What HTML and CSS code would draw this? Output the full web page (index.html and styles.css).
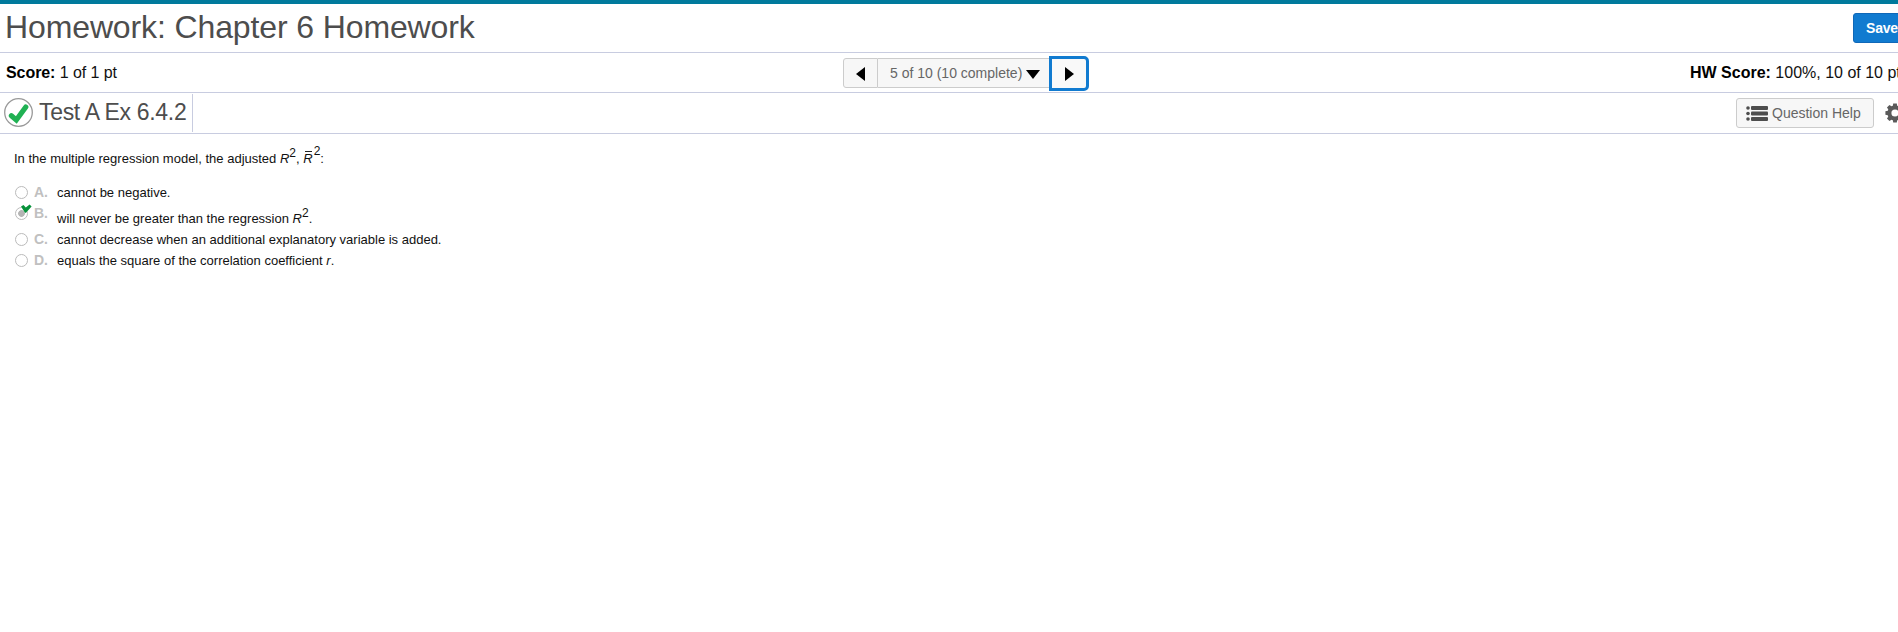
FILE: index.html
```
<!DOCTYPE html>
<html lang="en">
<head>
<meta charset="utf-8">
<title>Homework: Chapter 6 Homework</title>
<link rel="stylesheet" href="styles.css">
</head>
<body>
<div class="page">
  <header class="header"><h1 class="title">Homework: Chapter 6 Homework</h1><button class="save">Save</button></header>
  <div class="score-row">
    <div class="score"><b>Score:</b> <span>1 of 1 pt</span></div>
    <nav class="pager">
      <button class="prev"><svg width="9" height="14"><path d="M9 0V14L0 7Z"/></svg></button>
      <div class="position"><span class="position-text">5 of 10 (10 complete)</span><svg width="14" height="9"><path d="M0 0H14L7 9Z"/></svg></div>
      <button class="next"><svg width="9" height="14"><path d="M0 0V14L9 7Z"/></svg></button>
    </nav>
    <div class="hw-score"><b>HW Score:</b> <span>100%, 10 of 10 pts</span></div>
  </div>
  <div class="question-row">
    <div class="question-name">
      <svg class="status" width="30" height="30" viewBox="0 0 30 30"><circle cx="14.5" cy="14.5" r="13.8" fill="#fff" stroke="#999" stroke-width="1.3"/><path d="M7.4 17.8L12.3 22L21.8 9" fill="none" stroke="#20b153" stroke-width="5.2" stroke-linecap="round"/></svg>
      <h2 class="name">Test A Ex 6.4.2</h2>
    </div>
    <div class="tools">
      <button class="help"><svg width="22" height="15" viewBox="0 0 22 15" fill="#4d4d4d"><circle cx="2" cy="2" r="1.8"/><circle cx="2" cy="7.5" r="1.8"/><circle cx="2" cy="13" r="1.8"/><rect x="5" y="0" width="17" height="4" rx="1"/><rect x="5" y="5.5" width="17" height="4" rx="1"/><rect x="5" y="11" width="17" height="4" rx="1"/></svg><span>Question Help</span></button>
      <svg class="gear" width="20" height="20" viewBox="-10 -10 20 20"><circle r="5.6" fill="none" stroke="#5a5a5a" stroke-width="4"/><g fill="#5a5a5a"><path id="tooth" d="M-2.4 -6L-1.8 -9.6H1.8L2.4 -6Z"/><use href="#tooth" transform="rotate(45)"/><use href="#tooth" transform="rotate(90)"/><use href="#tooth" transform="rotate(135)"/><use href="#tooth" transform="rotate(180)"/><use href="#tooth" transform="rotate(225)"/><use href="#tooth" transform="rotate(270)"/><use href="#tooth" transform="rotate(315)"/></g></svg>
    </div>
  </div>
  <main class="question">
    <p class="prompt"><span class="prompt-text">In the multiple regression model, the adjusted</span> <i>R</i><sup>2</sup>, <i class="mean">R</i><sup class="high">2</sup>:</p>
    <div class="option"><span class="radio"></span><b class="letter">A.</b><span class="answer">cannot be negative.</span></div>
    <div class="option option-b"><span class="radio chosen"><svg class="tick" width="11" height="10" viewBox="0 0 11 10"><path d="M0 2.6L2.5 1L4.8 3.6L8.6 0.6L10.6 2.4L5 8.8H4Z" fill="#07923a"/></svg></span><b class="letter">B.</b><span class="answer">will never be greater than the regression <i>R</i><sup>2</sup>.</span></div>
    <div class="option"><span class="radio"></span><b class="letter">C.</b><span class="answer">cannot decrease when an additional explanatory variable is added.</span></div>
    <div class="option"><span class="radio"></span><b class="letter">D.</b><span class="answer">equals the square of the correlation coefficient <i>r</i>.</span></div>
  </main>
</div>
</body>
</html>
```
FILE: styles.css
```
* { box-sizing: border-box; }
body { margin: 0; background: #fff; color: #111; font-family: "Liberation Sans", Arial, sans-serif; overflow: hidden; }
button { font-family: inherit; padding: 0; margin: 0; }
svg { display: block; flex: none; }
.page { height: 632px; border-top: 4px solid #007a9c; overflow: hidden; white-space: nowrap; }
.header { height: 49px; display: flex; justify-content: space-between; border-bottom: 1px solid #c8cce0; }
.title { margin: 0; padding-left: 5px; font-size: 32px; font-weight: 400; line-height: 46px; letter-spacing: -0.12px; color: #4d4d4d; }
.save { width: 66px; height: 30px; margin: 9px -21px 0 0; border: 1px solid #1068b8; border-radius: 3px; background: #117bd0; color: #fff; font-size: 14px; font-weight: 700; letter-spacing: -0.2px; text-align: left; padding-left: 12px; }
.score-row { height: 40px; display: grid; grid-template-columns: 843px 247px 1fr; border-bottom: 1px solid #c8cce0; font-size: 16px; line-height: 39px; color: #111; }
.score { padding-left: 6px; letter-spacing: -0.07px; }
.score b, .hw-score b { color: #000; }
.hw-score { padding-left: 600px; }
.pager { display: flex; align-items: center; height: 40px; }
.prev { width: 35px; height: 30px; border: 1px solid #ccc; border-radius: 3px 0 0 3px; background: #f7f7f7; display: flex; align-items: center; justify-content: center; }
.position { width: 171px; height: 30px; border: solid #ccc; border-width: 1px 0; background: #f7f7f7; display: flex; align-items: center; gap: 4px; padding-left: 12px; font-size: 14px; color: #666; line-height: 28px; }
.position svg { margin-top: 3px; fill: #000; }
.prev svg, .next svg { margin-top: 1px; }
.next { width: 40px; height: 35px; border: 3px solid #117bd0; border-radius: 0 5px 5px 0; background: #f9f9f9; display: flex; align-items: center; justify-content: center; }
.question-row { height: 41px; display: flex; justify-content: space-between; border-bottom: 1px solid #c8cce0; }
.question-name { width: 193px; height: 38px; margin-top: 1px; border-right: 1px solid #c8cce0; display: flex; padding-left: 4px; }
.status { margin-top: 4px; }
.name { margin: 0 0 0 5px; font-size: 23px; font-weight: 400; line-height: 37px; letter-spacing: -0.32px; color: #4d4d4d; }
.tools { display: flex; align-items: center; gap: 11px; margin-right: -7px; }
.help { width: 138px; height: 30px; border: 1px solid #ccc; border-radius: 3px; background: #f7f7f7; display: flex; align-items: center; gap: 4px; padding-left: 9px; font-size: 14px; color: #666; }
.gear { margin-top: -1px; }
.question { padding: 12px 0 0 14px; font-size: 13px; color: #111; }
.prompt { margin: 0 0 12px; height: 24px; line-height: 26px; }
sup { font-size: 12px; line-height: 0; vertical-align: 6px; }
.high { vertical-align: 8px; }
.mean { display: inline-block; line-height: 12px; padding: 2px 1px 0 0; background: linear-gradient(#222, #222) 2px 0 / 7px 1px no-repeat; }
.option { height: 21px; display: flex; align-items: center; line-height: 21px; }
.option-b { height: 26px; align-items: flex-start; }
.radio { position: relative; flex: none; width: 13px; height: 13px; margin-left: 1px; border: 1px solid #bbb; border-radius: 50%; }
.chosen { margin-top: 4px; background: radial-gradient(circle, #b5b5b5 3px, transparent 3.7px); }
.tick { position: absolute; left: 5px; top: -4px; }
.letter { width: 23px; margin-left: 6px; color: #c0c0c0; font-size: 14px; }
.option-b .answer { padding-top: 5px; }
```
